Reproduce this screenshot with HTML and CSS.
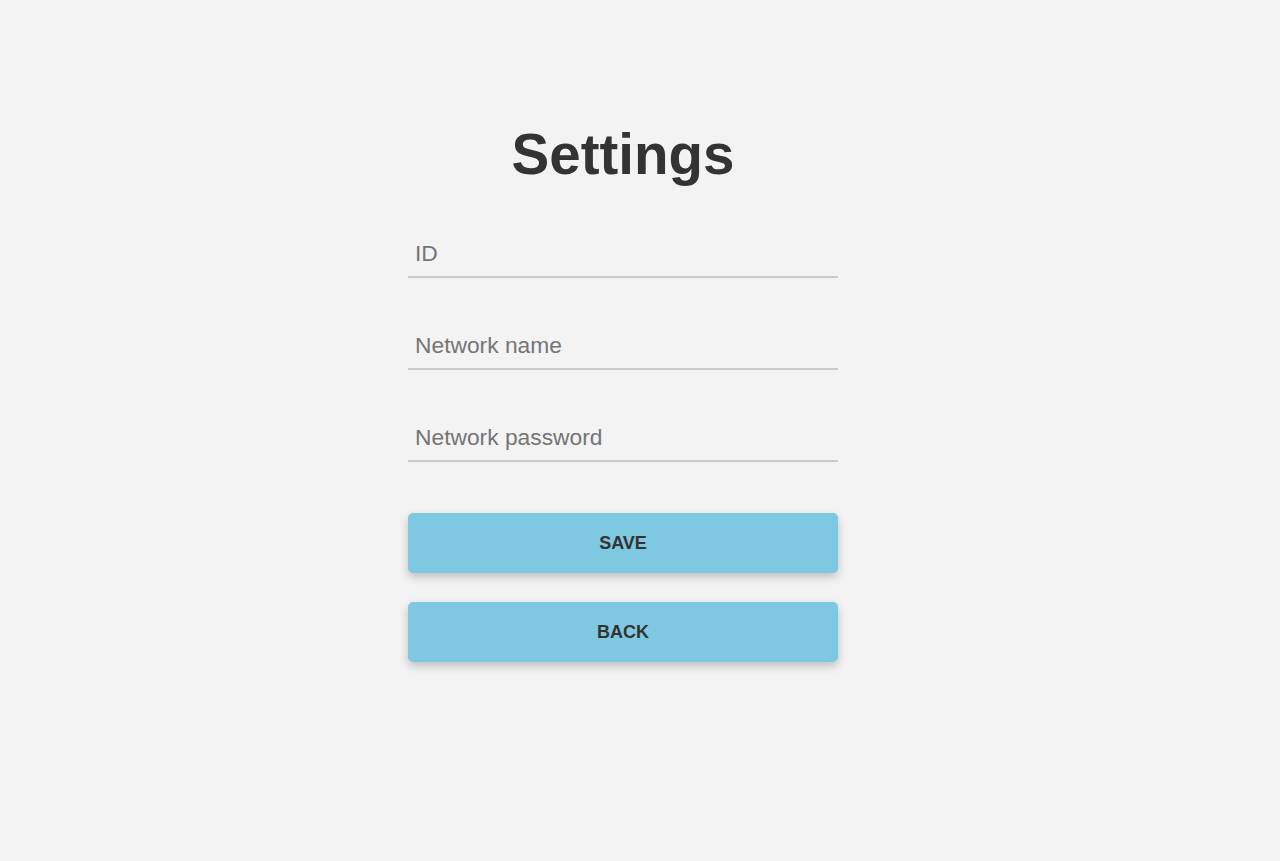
FILE: index.html
```html
<!DOCTYPE html>
<html lang="en">
<head>
<meta charset="utf-8">
<title>Settings</title>
<link rel="stylesheet" href="styles.css">
</head>
<body>
<main class="page">
  <form class="settings">
    <h1 class="title">Settings</h1>
    <div class="field"><input class="input" type="text" placeholder="ID"></div>
    <div class="field"><input class="input" type="text" placeholder="Network name"></div>
    <div class="field"><input class="input" type="password" placeholder="Network password"></div>
    <div class="actions">
      <button type="button" class="btn">SAVE</button>
      <button type="button" class="btn">BACK</button>
    </div>
  </form>
</main>
</body>
</html>
```

FILE: styles.css
```css
* { box-sizing: border-box; }
html, body {
  margin: 0;
  padding: 0;
  height: 100%;
}
body {
  background: #f3f3f3;
  font-family: "Liberation Sans", Arial, sans-serif;
  color: #333;
}
.page {
  display: flex;
  justify-content: center;
  padding-top: 120px;
  padding-right: 34px;
}
.settings {
  width: 430px;
  display: flex;
  flex-direction: column;
}
.title {
  margin: 0 0 40px;
  text-align: center;
  font-size: 56.5px;
  line-height: 70px;
  font-weight: 700;
  color: #333;
}
.field {
  margin-bottom: 44px;
}
.input {
  display: block;
  width: 100%;
  height: 48px;
  border: none;
  border-bottom: 2px solid #cbcbcb;
  background: transparent;
  padding: 0 7px;
  font-family: "Liberation Sans", Arial, sans-serif;
  font-size: 22.8px;
  color: #333;
  outline: none;
}
.input::placeholder {
  color: #757575;
}
.actions {
  display: flex;
  flex-direction: column;
  gap: 29px;
  margin-top: 7px;
}
.btn {
  height: 60px;
  border: none;
  border-radius: 5px;
  background: #7fc8e1;
  color: #333;
  font-family: "Liberation Sans", Arial, sans-serif;
  font-size: 18px;
  font-weight: 700;
  box-shadow: 0 4px 10px rgba(0, 0, 0, 0.22);
  cursor: pointer;
}
```
